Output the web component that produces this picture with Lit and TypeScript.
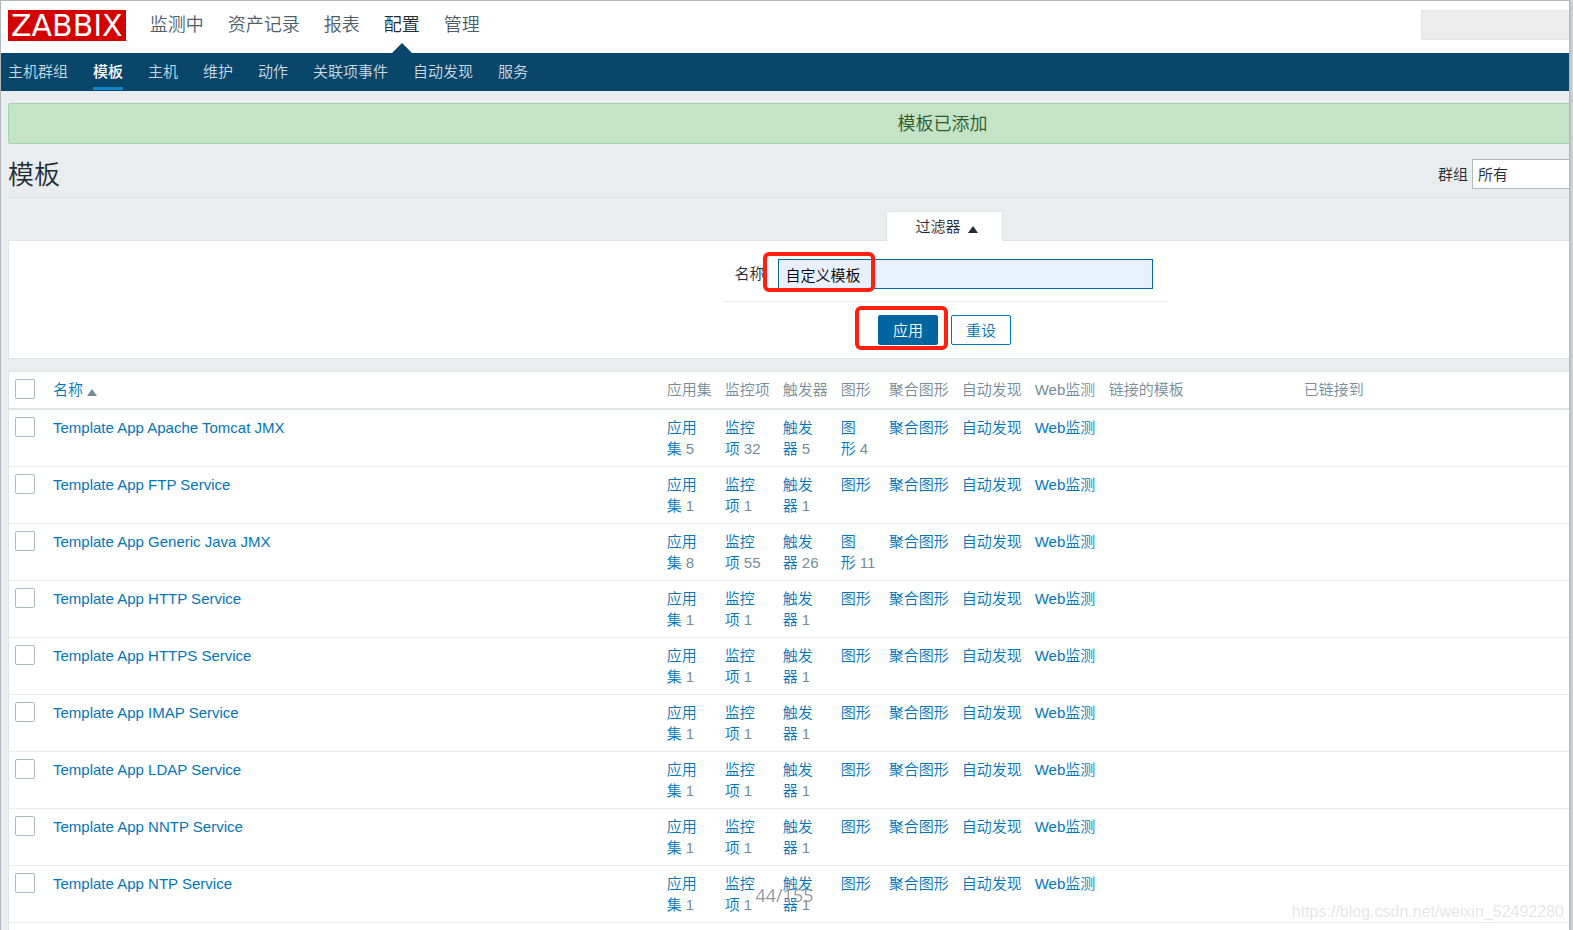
import { LitElement, html, css } from "lit";
import { customElement, property } from "lit/decorators.js";

interface TemplateRow {
  name: string;
  applications: number;
  items: number;
  triggers: number;
  graphs?: number;
}

const MENU = ["监测中", "资产记录", "报表", "配置", "管理"];
const SUBMENU = ["主机群组", "模板", "主机", "维护", "动作", "关联项事件", "自动发现", "服务"];

const service = (name: string): TemplateRow => ({
  name: `Template App ${name} Service`,
  applications: 1,
  items: 1,
  triggers: 1,
});

const ROWS: TemplateRow[] = [
  { name: "Template App Apache Tomcat JMX", applications: 5, items: 32, triggers: 5, graphs: 4 },
  service("FTP"),
  { name: "Template App Generic Java JMX", applications: 8, items: 55, triggers: 26, graphs: 11 },
  service("HTTP"),
  service("HTTPS"),
  service("IMAP"),
  service("LDAP"),
  service("NNTP"),
  service("NTP"),
];

@customElement("zbx-header")
class ZbxHeader extends LitElement {
  static styles = css`
    :host { display: block; }
    a { text-decoration: none; }
    .top {
      display: flex;
      align-items: stretch;
      height: 52px;
      padding-left: 7px;
      background: #fff;
    }
    .logo {
      align-self: flex-start;
      margin-top: 9px;
      padding: 0 3px;
      background: #d40000;
      color: #fff;
      font: 30px/31px "DejaVu Sans", sans-serif;
    }
    .menu {
      display: flex;
      gap: 24px;
      flex: 1;
      margin: 0 0 0 24px;
      padding: 0;
      list-style: none;
    }
    .menu a {
      display: block;
      color: #4f5d67;
      font-size: 18px;
      line-height: 49px;
    }
    .menu li { position: relative; }
    .menu .current a { color: #1f2c33; }
    .menu .current::after {
      content: "";
      position: absolute;
      left: 50%;
      bottom: 0;
      margin-left: -10px;
      border: 10px solid transparent;
      border-top: 0;
      border-bottom-color: #0a466a;
    }
    .search {
      box-sizing: border-box;
      width: 464px;
      height: 30px;
      margin-top: 9px;
      border: 1px solid #e3e3e3;
      background: #ececec;
    }
    .sub {
      display: flex;
      gap: 25px;
      height: 38px;
      margin: 0;
      padding: 0 7px;
      background: #0a466a;
      list-style: none;
    }
    .sub a {
      display: block;
      box-sizing: border-box;
      height: 37px;
      border-bottom: 3px solid transparent;
      color: #cbdbe5;
      font-size: 15px;
      line-height: 37px;
    }
    .sub .current a {
      border-color: #1385ca;
      color: #fff;
      font-weight: 500;
    }
  `;

  render() {
    return html`
      <header class="top">
        <a class="logo" href="#">ZABBIX</a>
        <ul class="menu">
          ${MENU.map((m) => html`<li class=${m === "配置" ? "current" : ""}><a href="#">${m}</a></li>`)}
        </ul>
        <div class="search"></div>
      </header>
      <ul class="sub">
        ${SUBMENU.map((m) => html`<li class=${m === "模板" ? "current" : ""}><a href="#">${m}</a></li>`)}
      </ul>
    `;
  }
}

@customElement("zbx-filter")
class ZbxFilter extends LitElement {
  static styles = css`
    :host { display: block; }
    .tab-row { display: flex; justify-content: center; }
    .tab {
      display: flex;
      align-items: center;
      gap: 7px;
      height: 30px;
      margin-bottom: -1px;
      padding: 0 24px 0 28px;
      border: 1px solid #dfe4e7;
      border-bottom: 0;
      border-radius: 2px 2px 0 0;
      background: #fff;
      color: #1f2c33;
      font: inherit;
      z-index: 1;
    }
    .up {
      margin-top: 6px;
      border: 5px solid transparent;
      border-top: 0;
      border-bottom: 7px solid #1f2c33;
    }
    .panel {
      display: flex;
      flex-direction: column;
      align-items: center;
      padding: 18px 0 13px;
      border: 1px solid #dfe4e7;
      background: #fff;
    }
    .field {
      display: flex;
      align-items: center;
      gap: 13px;
      padding: 0 13px 12px 11px;
      border-bottom: 1px solid #ebeef0;
    }
    .label { line-height: 28px; }
    .box { position: relative; display: flex; }
    .text {
      box-sizing: border-box;
      width: 375px;
      height: 30px;
      padding: 0 7px;
      border: 1px solid #0a66a0;
      background: #e8f0fe;
      color: #000;
      font: inherit;
      outline: none;
    }
    .actions { display: flex; gap: 13px; margin-top: 13px; }
    .btn {
      width: 60px;
      height: 30px;
      padding: 0;
      border: 1px solid #0275b8;
      border-radius: 2px;
      background: #fff;
      color: #0275b8;
      font: inherit;
    }
    .primary { border-color: #02659f; background: #02659f; color: #fff; }
    .mark {
      position: absolute;
      box-sizing: border-box;
      border: 4px solid #ff2010;
      border-radius: 6px;
      pointer-events: none;
    }
    .mark-name { left: -15px; top: -7px; width: 112px; height: 40px; }
    .mark-apply { left: -23px; top: -9px; width: 93px; height: 44px; }
  `;

  render() {
    return html`
      <div class="tab-row">
        <button class="tab" type="button">过滤器<span class="up"></span></button>
      </div>
      <form class="panel" @submit=${(e: Event) => e.preventDefault()}>
        <div class="field">
          <label class="label" for="name">名称</label>
          <div class="box">
            <input class="text" id="name" type="text" value="自定义模板" />
            <span class="mark mark-name"></span>
          </div>
        </div>
        <div class="actions">
          <div class="box">
            <button class="btn primary" type="submit">应用</button>
            <span class="mark mark-apply"></span>
          </div>
          <button class="btn" type="button">重设</button>
        </div>
      </form>
    `;
  }
}

@customElement("zbx-templates")
class ZbxTemplates extends LitElement {
  @property({ attribute: false }) rows: TemplateRow[] = [];

  static styles = css`
    :host {
      display: block;
      border: 1px solid #dfe4e7;
      border-bottom: 0;
      background: #fff;
    }
    table {
      width: 100%;
      border-collapse: separate;
      border-spacing: 0;
      table-layout: fixed;
      line-height: 21px;
    }
    .c-check { width: 38px; }
    .c-name { width: 32.8%; }
    .c-three { width: 58px; }
    .c-two { width: 48px; }
    .c-four { width: 73px; }
    .c-web { width: 74px; }
    .c-linked { width: 195px; }
    th, td {
      padding: 7px 6px;
      text-align: left;
      vertical-align: top;
      font-weight: inherit;
      color: #768d99;
    }
    th { height: 22px; border-bottom: 2px solid #dfe4e7; white-space: nowrap; }
    td { height: 42px; border-bottom: 1px solid #ebeef0; }
    a { color: #0275b8; text-decoration: none; }
    .check {
      display: block;
      box-sizing: border-box;
      width: 20px;
      height: 20px;
      margin: 0;
      appearance: none;
      border: 1px solid #acbbc2;
      border-radius: 2px;
      background: #fff;
    }
    .asc {
      display: inline-block;
      margin-left: 4px;
      border: 5px solid transparent;
      border-top: 0;
      border-bottom: 7px solid #768d99;
      vertical-align: -1px;
    }
  `;

  private link(label: string, count?: number) {
    return html`<td><a href="#">${label}</a>${count ? `\u00a0${count}` : ""}</td>`;
  }

  render() {
    return html`
      <table>
        <colgroup>
          <col class="c-check" /><col class="c-name" />
          <col class="c-three" /><col class="c-three" /><col class="c-three" />
          <col class="c-two" />
          <col class="c-four" /><col class="c-four" /><col class="c-web" />
          <col class="c-linked" /><col />
        </colgroup>
        <thead>
          <tr>
            <th><input class="check" type="checkbox" aria-label="全选" /></th>
            <th><a href="#">名称<span class="asc"></span></a></th>
            ${["应用集", "监控项", "触发器", "图形", "聚合图形", "自动发现", "Web监测", "链接的模板", "已链接到"].map(
              (h) => html`<th>${h}</th>`
            )}
          </tr>
        </thead>
        <tbody>
          ${this.rows.map(
            (r) => html`<tr>
              <td><input class="check" type="checkbox" aria-label=${r.name} /></td>
              <td><a href="#">${r.name}</a></td>
              ${this.link("应用集", r.applications)}
              ${this.link("监控项", r.items)}
              ${this.link("触发器", r.triggers)}
              ${this.link("图形", r.graphs)}
              ${this.link("聚合图形")}
              ${this.link("自动发现")}
              ${this.link("Web监测")}
              <td></td>
              <td></td>
            </tr>`
          )}
        </tbody>
      </table>
    `;
  }
}

@customElement("app-root")
class AppRoot extends LitElement {
  static styles = css`
    :host {
      display: flex;
      box-sizing: border-box;
      height: 100vh;
      padding-right: 4px;
      background: linear-gradient(to left, #d5dadd, #b2b7ba 4px);
      color: #1f2c33;
      font: 350 15px/21px "Liberation Sans", "Noto Sans CJK SC", sans-serif;
    }
    .window {
      flex: 1;
      min-width: 0;
      overflow: hidden;
      border: solid #b2b7ba;
      border-width: 1px 0 0 1px;
      background: #e9edf0;
    }
    /* The page runs past the right edge of the window and is clipped by it. */
    .page {
      display: flex;
      flex-direction: column;
      width: calc(100% + 316px);
      min-height: 100%;
    }
    .content {
      display: flex;
      flex: 1;
      flex-direction: column;
      padding: 12px 4px 0 7px;
    }
    .message {
      padding: 10px 12px 8px 8px;
      border: 1px solid #a3d4a5;
      border-radius: 2px;
      background: #c5e3c7;
      color: #2c5a2e;
      font-size: 18px;
      text-align: center;
    }
    .title {
      display: flex;
      align-items: center;
      justify-content: space-between;
      height: 53px;
      border-bottom: 1px solid #dfe4e7;
    }
    h1 { margin: 8px 0 0; font-size: 26px; font-weight: inherit; line-height: 36px; }
    .group { display: flex; align-items: center; gap: 4px; margin-top: 7px; }
    select {
      width: 409px;
      height: 30px;
      padding: 0 5px;
      appearance: none;
      border: 1px solid #acbbc2;
      border-radius: 0;
      background: #fff;
      color: inherit;
      font: inherit;
    }
    zbx-filter { margin: 13px 0 12px; }
    zbx-templates { flex: 1; }
    .counter {
      position: fixed;
      left: 0;
      right: 4px;
      bottom: 23px;
      color: #999;
      font: 18px/24px "Open Sans", sans-serif;
      text-align: center;
      pointer-events: none;
    }
    .watermark {
      position: fixed;
      right: 9px;
      bottom: 8px;
      color: #e6e6e6;
      font-size: 16px;
    }
  `;

  render() {
    return html`
      <div class="window">
        <div class="page">
          <zbx-header></zbx-header>
          <main class="content">
            <div class="message">模板已添加</div>
            <div class="title">
              <h1>模板</h1>
              <div class="group">
                <label for="group">群组</label>
                <select id="group"><option>所有</option></select>
              </div>
            </div>
            <zbx-filter></zbx-filter>
            <zbx-templates .rows=${ROWS}></zbx-templates>
          </main>
        </div>
      </div>
      <div class="counter">44/155</div>
      <div class="watermark">https://blog.csdn.net/weixin_52492280</div>
    `;
  }
}
